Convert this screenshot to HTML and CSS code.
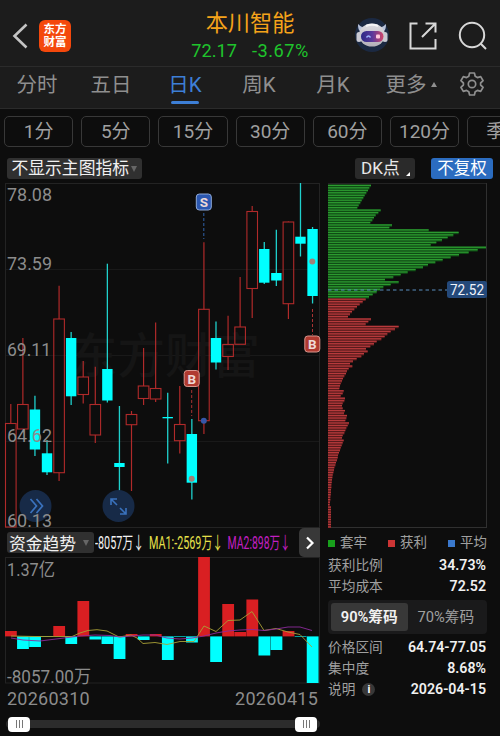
FILE: index.html
```
<!DOCTYPE html>
<html lang="zh-CN">
<head>
  <meta charset="utf-8">
  <title>本川智能</title>
  <link rel="stylesheet" href="styles.css">
</head>
<body>
  <header class="header">
    <svg class="back" width="16" height="26" viewBox="0 0 16 26"><path d="M14.500 1.500L2.500 13l12 11.500" fill="none" stroke="#c4c4c4" stroke-width="2.600"/></svg>
    <div class="logo"><span>东方</span><span>财富</span></div>
    <div class="stock">
      <h1 class="stock-name">本川智能</h1>
      <div class="stock-price"><span>72.17</span><span class="stock-change">-3.67%</span></div>
    </div>
    <div class="header-icons">
      <svg class="robot" width="36" height="36" viewBox="0 0 36 36">
        <defs>
          <linearGradient id="visor"><stop offset="0" stop-color="#2c2a86"/><stop offset=".5" stop-color="#5b3a9c"/><stop offset="1" stop-color="#d0456a"/></linearGradient>
          <linearGradient id="shell" x2="0" y2="1"><stop offset="0" stop-color="#dcdce2"/><stop offset="1" stop-color="#b4b0b8"/></linearGradient>
        </defs>
        <circle cx="18" cy="17" r="17" fill="#1b2942"/>
        <path d="M4 6c0 5 1 8 5 8l5-4c-4 0-7-1-10-4zM32 6c0 5-1 8-5 8l-5-4c4 0 7-1 10-4z" fill="#b9c4dc"/>
        <ellipse cx="18" cy="17" rx="13" ry="11.500" fill="url(#shell)"/>
        <rect x="2.500" y="14" width="5" height="10" rx="2.500" fill="#c9c9d2"/>
        <rect x="28.500" y="14" width="5" height="10" rx="2.500" fill="#c9c9d2"/>
        <path d="M12 8q6-2.500 12 0" fill="none" stroke="#f4f4f6" stroke-width="2"/>
        <rect x="7" y="13" width="22.500" height="11" rx="5.500" fill="url(#visor)"/>
        <path d="M12.500 19.500q2-3 4 0" fill="none" stroke="#9db8ff" stroke-width="1.400"/>
        <rect x="22" y="16.500" width="4" height="4" rx="1" fill="#ffc9dc"/>
      </svg>
      <svg class="share" width="28" height="28" viewBox="0 0 28 28"><path d="M8.500 1.500H1.500V26.500H26.500V17M16.500 1.500H26.500V10.500M26 2L13 15" fill="none" stroke="#d8d8d8" stroke-width="2"/></svg>
      <svg class="search" width="30" height="30" viewBox="0 0 30 30"><circle cx="14" cy="14" r="12.200" fill="none" stroke="#d8d8d8" stroke-width="2"/><path d="M22.800 22.800L28 28" stroke="#d8d8d8" stroke-width="2"/></svg>
    </div>
  </header>

  <nav class="tabs">
    <div class="tab">分时</div>
    <div class="tab">五日</div>
    <div class="tab active">日K</div>
    <div class="tab">周K</div>
    <div class="tab">月K</div>
    <div class="tab more">更多<i class="tri-up"></i></div>
    <div class="tab gear">
      <svg width="26" height="26" viewBox="0 0 26 26" fill="none" stroke="#8f8f8f" stroke-width="1.700" stroke-linejoin="round">
        <path d="M10.600 2h4.800l.8 3.300 2.200 1.300 3.300-1 2.400 4.100-2.500 2.300v2l2.500 2.300-2.400 4.100-3.300-1-2.200 1.300-.8 3.300h-4.800l-.8-3.300-2.200-1.300-3.300 1-2.400-4.100L4.400 14v-2L1.900 9.700l2.400-4.100 3.300 1 2.200-1.300z"/>
        <circle cx="13" cy="13" r="3.700"/>
      </svg>
    </div>
  </nav>

  <div class="periods">
    <div class="period">1分</div>
    <div class="period">5分</div>
    <div class="period">15分</div>
    <div class="period">30分</div>
    <div class="period">60分</div>
    <div class="period">120分</div>
    <div class="period">季K</div>
  </div>

  <div class="toolbar">
    <div class="select">不显示主图指标<i class="tri-down"></i></div>
    <div class="dk">DK点<i class="corner"></i></div>
    <div class="adjust">不复权</div>
  </div>

  <main class="main">
    <section class="left">
      <svg id="kline" width="322" height="346" viewBox="0 182 322 346"></svg>

      <div class="sub-header">
        <div class="select sub-select">资金趋势<i class="tri-down"></i></div>
        <svg class="sub-values" width="204" height="26" viewBox="95 529 204 26">
          <text x="95" y="548.500" textLength="49" lengthAdjust="spacingAndGlyphs" fill="#f2f2f2">-8057万↓</text>
          <text x="149" y="548.500" textLength="74" lengthAdjust="spacingAndGlyphs" fill="#e6e04a">MA1:-2569万↓</text>
          <text x="227.500" y="548.500" textLength="63" lengthAdjust="spacingAndGlyphs" fill="#c21fc2">MA2:898万↓</text>
        </svg>
        <div class="next"><svg width="10" height="14" viewBox="0 0 10 14"><path d="M2 1.500L7.500 7 2 12.500" fill="none" stroke="#fff" stroke-width="2.200"/></svg></div>
      </div>

      <svg id="flow" width="322" height="128" viewBox="0 557 322 128"></svg>

      <div class="dates"><span>20260310</span><span>20260415</span></div>
      <div class="slider">
        <div class="handle"><i></i><i></i><i></i></div>
        <div class="handle"><i></i><i></i><i></i></div>
      </div>
    </section>

    <section class="right">
      <svg id="chips" width="172" height="346" viewBox="328 182 172 346"></svg>
      <div class="legend">
        <span><i class="dot green"></i>套牢</span>
        <span><i class="dot red"></i>获利</span>
        <span><i class="dot blue"></i>平均</span>
      </div>
      <div class="row"><span>获利比例</span><b>34.73%</b></div>
      <div class="row"><span>平均成本</span><b>72.52</b></div>
      <div class="switch"><div class="on">90%筹码</div><div>70%筹码</div></div>
      <div class="row"><span>价格区间</span><b>64.74-77.05</b></div>
      <div class="row"><span>集中度</span><b>8.68%</b></div>
      <div class="row"><span>说明<i class="info">i</i></span><b>2026-04-15</b></div>
    </section>
  </main>
  <script src="chart.js"></script>
</body>
</html>
```

FILE: styles.css
```
* {
  box-sizing: border-box;
}

body {
  margin: 0;
  width: 500px;
  height: 736px;
  overflow: hidden;
  background-color: #0d0d0d;
  color: #a0a0a0;
  font-family: Roboto, "Noto Sans CJK SC", sans-serif;
}

svg {
  display: block;
}

i {
  font-style: normal;
}

.header {
  display: flex;
  align-items: center;
  height: 67px;
  padding: 5px 13px 0 12px;
  background-color: #1c1c1c;
  border-bottom: 1px solid #2b2b2b;
}

.logo {
  display: flex;
  flex-direction: column;
  align-items: center;
  justify-content: center;
  width: 32px;
  height: 32px;
  margin-left: 11px;
  border-radius: 6px;
  background-color: #f4480c;
  color: #fff;
  font-size: 11.500px;
  font-weight: 700;
  line-height: 13px;
}

.stock {
  width: 140px;
  margin-left: 109px;
  text-align: center;
}

.stock-name {
  margin: 2px 0 0;
  color: #f5a31a;
  font-size: 22.200px;
  font-weight: 400;
  line-height: 29px;
}

.stock-price {
  display: flex;
  justify-content: center;
  gap: 15px;
  color: #1fc42c;
  font-size: 18.200px;
  line-height: 26px;
}

.stock-change {
  letter-spacing: 0.5px;
}

.header-icons {
  display: flex;
  align-items: center;
  margin-left: auto;
}

.robot {
  margin-right: 1px;
}

.share {
  margin-left: 18px;
}

.search {
  margin: 0 -1px 0 21px;
}

.tabs {
  display: flex;
  height: 42px;
  background-color: #1c1c1c;
  border-bottom: 1px solid #2b2b2b;
}

.tab {
  display: flex;
  flex-direction: column;
  align-items: center;
  width: 74px;
  flex-shrink: 0;
  color: #8f8f8f;
  font-size: 20.500px;
  line-height: 37px;
}

.tab.active {
  color: #3d7fd6;
}

.tab.active::after {
  content: "";
  width: 28px;
  height: 3px;
  margin-top: -3px;
  border-radius: 2px;
  background-color: #3d7fd6;
}

.tab.more {
  flex-direction: row;
  justify-content: center;
  align-items: flex-start;
  width: 82px;
}

.tab.gear {
  width: 40px;
  padding-top: 4px;
}

.tri-up {
  margin: 15px 0 0 4px;
  border: 3.500px solid transparent;
  border-top: 0;
  border-bottom: 5px solid #8f8f8f;
}

.periods {
  display: flex;
  gap: 8px;
  height: 48px;
  padding: 7px 0 0 4px;
  overflow: hidden;
}

.period {
  flex: 0 0 69.200px;
  height: 31px;
  border: 1px solid #383838;
  border-radius: 5px;
  font-size: 19px;
  line-height: 30px;
  text-align: center;
}

.toolbar {
  display: flex;
  height: 25px;
  padding: 1px 7px 0;
  line-height: 21px;
}

.select {
  display: flex;
  align-items: center;
  width: 135px;
  height: 21px;
  padding-left: 4.500px;
  border-radius: 3px;
  background-color: #303030;
  color: #f0f0f0;
  font-size: 16.800px;
  white-space: nowrap;
}

.tri-down {
  margin-left: 2px;
  border: 3px solid transparent;
  border-bottom: 0;
  border-top: 6px solid #666;
}

.dk {
  display: flex;
  align-items: center;
  width: 60px;
  height: 21px;
  margin-left: 213px;
  padding-left: 6px;
  border-radius: 3px;
  background-color: #2a2a2a;
  color: #e8e8e8;
  font-size: 17px;
}

.corner {
  margin: 10px 0 0 6px;
  border: 2.500px solid #fff;
  border-top-color: transparent;
  border-left-color: transparent;
}

.adjust {
  width: 62px;
  height: 21px;
  margin-left: 16px;
  border-radius: 3px;
  background-color: #2b6cc0;
  color: #fff;
  font-size: 16.500px;
  text-align: center;
}

.main {
  display: flex;
}

.left {
  width: 328px;
}

.axis {
  fill: #8c8c8c;
  font-size: 18px;
}

.watermark {
  fill: #151515;
  font-size: 47.500px;
  font-weight: 500;
}

.mark {
  fill: #eed9d6;
  font-size: 13.500px;
  font-weight: 700;
  text-anchor: middle;
}

.price-tag {
  fill: #f0f4fa;
  font-size: 15.200px;
  text-anchor: middle;
}

.sub-header {
  display: flex;
  height: 29px;
  padding-left: 7px;
}

.sub-select {
  width: 87px;
  margin-top: 4px;
  padding-left: 2px;
}

.sub-select .tri-down {
  margin-left: 7px;
}

.sub-values {
  margin: 1px 0 0 1px;
  font-size: 17.500px;
}

.next {
  display: flex;
  align-items: center;
  justify-content: center;
  width: 21px;
  height: 29px;
  border-radius: 5px 0 0 5px;
  background-color: #383838;
}

.dates {
  display: flex;
  justify-content: space-between;
  width: 318px;
  padding: 0 0 0 7px;
  color: #8c8c8c;
  font-size: 18px;
  letter-spacing: 0.250px;
  line-height: 27px;
}

.slider {
  display: flex;
  justify-content: space-between;
  align-items: center;
  width: 314px;
  height: 8px;
  margin: 8px 0 0 6px;
  padding: 0 3px 0 2px;
  border-radius: 4px;
  background-color: #2c2c2c;
}

.handle {
  display: flex;
  align-items: center;
  justify-content: center;
  gap: 2px;
  width: 22px;
  height: 15px;
  border-radius: 4px;
  background-color: #fff;
}

.handle i {
  width: 1px;
  height: 8px;
  background-color: #777;
}

.right {
  width: 172px;
}

.legend {
  display: flex;
  justify-content: space-between;
  width: 159px;
  height: 27px;
  font-size: 13.500px;
  line-height: 28px;
}

.dot {
  display: inline-block;
  width: 7px;
  height: 7px;
  margin-right: 5px;
}

.green {
  background-color: #18a01c;
}

.red {
  background-color: #cc3434;
}

.blue {
  background-color: #3a78cc;
}

.row {
  display: flex;
  justify-content: space-between;
  width: 158px;
  height: 20.700px;
  font-size: 13.700px;
  line-height: 21px;
}

.row b {
  color: #f0f0f0;
  font-size: 14.200px;
  font-weight: 600;
}

.switch {
  display: flex;
  width: 159px;
  height: 34px;
  margin: 4px 0 3px;
  padding: 3px;
  border-radius: 4px;
  background-color: #1a1a1b;
  font-size: 14.700px;
  line-height: 29px;
  text-align: center;
}

.switch div {
  flex: 1;
}

.switch .on {
  border-radius: 3px;
  background-color: #383838;
  color: #f2f2f2;
  font-weight: 600;
}

.info {
  display: inline-block;
  width: 13px;
  height: 13px;
  margin-left: 7px;
  border-radius: 50%;
  background-color: #383838;
  color: #fff;
  font-size: 11px;
  font-weight: 700;
  line-height: 13px;
  text-align: center;
  vertical-align: 1px;
}
```

FILE: chart.js
```
var RED = '#b02a2a';
var CYAN = '#00ffff';
var START = 10.8;
var STEP = 12.07;

// up/down, high, body top, body bottom, low
var candles = [
  ['u', 404, 423.5, 527, 527], ['u', 338, 404.5, 429, 429],
  ['d', 395.7, 409.5, 449.5, 456], ['d', 440, 453.3, 472.3, 475],
  ['u', 285.7, 319, 472.7, 481], ['d', 332, 338, 396.3, 405],
  ['u', 361, 377, 394.5, 403.5], ['u', 366.7, 404.5, 435, 443],
  ['d', 263.7, 369, 400.5, 402.5], ['d', 406, 463, 467, 491],
  ['u', 411, 414.5, 424.7, 491], ['u', 348, 386, 398.5, 405],
  ['u', 322.5, 388.5, 399, 402], ['d', 392.7, 417, 418.3, 463.5],
  ['u', 386, 424.5, 440.7, 453.5], ['d', 419, 434, 482.7, 499.5],
  ['u', 242.3, 309.3, 420.7, 434], ['d', 321.5, 338, 362.5, 369.5],
  ['u', 315.7, 344.5, 356.5, 370], ['u', 277, 327, 344.3, 344.3],
  ['u', 206, 211.5, 288.5, 318], ['d', 242, 249, 282.7, 284],
  ['d', 229.7, 273, 280.5, 286], ['u', 221.5, 222, 303.7, 319],
  ['d', 183, 236.7, 243.7, 256.5], ['d', 227, 229, 296, 303.5]
];

var flows = [631, 649, 647, 637, 626, 644, 601, 639.5, 644, 659, 634, 640, 634,
  660, 637, 642.5, 557, 662, 604, 632, 599.5, 655.5, 650, 631, 637, 683];

var ma1 = '11,636 35,636.5 72,636.5 80,633 88,630.5 97,629.7 107,631 113,634 119,637 131,635 137,638 143,643.5 155,642.5 167,644.5 180,641.5 194,641.5 204,626 216,631.5 228,620.5 240,620 252,611.5 264,630.5 276,628.5 288,632 300,634.5 312,647';
var ma2 = '11,638 23,640 40,641 60,638.5 80,636 95,635 110,635.5 120,637 143,635 155,635 167,638 180,639 192,638 204,636 216,633 228,631 240,630 252,629.5 264,630.5 276,629 288,627 300,627 312,630.5';

// chip distribution, top to bottom, bar length * 3
var trapped = [129, 124, 120, 115, 110, 106, 101, 97, 92, 88, 158, 151, 143, 138, 133,
  127, 192, 184, 302, 392, 376, 359, 342, 325, 308, 474, 449, 422, 393, 368, 344, 322,
  300, 285, 263, 239, 218, 196, 171, 212, 188, 166, 156, 146, 134, 123];
var profit = [113, 104, 95, 87, 79, 72, 66, 60, 129, 121, 113, 212, 201, 188, 178, 170,
  160, 146, 138, 127, 114, 119, 108, 100, 86, 75, 66, 73, 62, 57, 54, 49, 45, 42, 38, 36,
  34, 47, 44, 38, 51, 49, 44, 42, 44, 51, 48, 57, 55, 52, 63, 59, 55, 52, 49, 44, 42, 47,
  44, 41, 38, 36, 33, 30, 29, 27, 24, 22, 19, 18, 16, 14, 13, 12, 11, 10, 10, 9, 9, 8, 7,
  7, 6, 5, 9, 9, 9, 9, 9, 9, 9, 9, 9];

function rect(x, y, w, h, attrs) {
  return '<rect x="' + x + '" y="' + y + '" width="' + w + '" height="' + h + '" ' + attrs + '/>';
}

function line(x1, y1, x2, y2, color, extra) {
  return '<line x1="' + x1 + '" y1="' + y1 + '" x2="' + x2 + '" y2="' + y2 + '" stroke="' + color + '" ' + (extra || '') + '/>';
}

function label(x, y, text, len) {
  return '<text class="axis" x="' + x + '" y="' + y + '" textLength="' + len + '" lengthAdjust="spacingAndGlyphs">' + text + '</text>';
}

function marker(x, y, text, fill, stroke) {
  return rect(x - 7.5, y - 8, 15, 16, 'rx="3" fill="' + fill + '" stroke="' + stroke + '"') +
    '<text class="mark" x="' + x + '" y="' + (y + 5) + '">' + text + '</text>';
}

function drawKline() {
  var s = rect(5.5, 183.5, 314, 344, 'fill="none" stroke="#232323"');
  s += line(6, 269.5, 319, 269.5, '#191919') + line(6, 355.5, 319, 355.5, '#191919') + line(6, 441.5, 319, 441.5, '#191919');
  s += '<text class="watermark" x="70" y="373">东方财富</text>';
  candles.forEach(function (c, i) {
    var x = START + STEP * i;
    if (c[0] === 'u') {
      s += line(x, c[1], x, c[2], RED, 'stroke-width="1.2"') + line(x, c[3], x, c[4], RED, 'stroke-width="1.2"');
      s += rect(x - 5.3, c[2], 10.6, c[3] - c[2], 'fill="none" stroke="' + RED + '" stroke-width="1.1"');
    } else {
      s += line(x, c[1], x, c[4], '#1fd0cc', 'stroke-width="1.3"');
      s += rect(x - 5.2, c[2], 10.4, c[3] - c[2], 'fill="' + CYAN + '"');
    }
  });
  s += line(203.8, 213, 203.8, 239, '#2f62a8', 'stroke-dasharray="3 2"');
  s += line(191.7, 390, 191.7, 416, '#a83232', 'stroke-dasharray="3 2"');
  s += line(312.5, 309, 312.5, 335, '#a83232', 'stroke-dasharray="3 2"');
  s += marker(203.8, 202, 'S', '#2b57b0', '#8fa9d8');
  s += marker(191.7, 378.5, 'B', '#b03a30', '#d9968e');
  s += marker(312.3, 344, 'B', '#b03a30', '#d9968e');
  s += '<circle cx="203.8" cy="420.7" r="3" fill="#3557a8"/>';
  s += '<circle cx="191.7" cy="478.7" r="3" fill="#a08078"/><circle cx="312.3" cy="261.5" r="3" fill="#a08078"/>';
  s += '<circle cx="35.5" cy="506" r="16" fill="#172a47"/><circle cx="118.5" cy="506" r="16" fill="#172a47"/>';
  s += '<path d="M30.5 499l6 7-6 7M36.5 499l6 7-6 7" fill="none" stroke="#3a72bd" stroke-width="1.7"/>';
  s += '<path d="M117 505l-6-6m0 6v-6h6M120 508l6 6m0-6v6h-6" fill="none" stroke="#3a72bd" stroke-width="1.6"/>';
  s += label(7, 201, '78.08', 45) + label(7, 269.5, '73.59', 45) + label(7, 355.5, '69.11', 44) +
    label(7, 442, '64.62', 45) + label(7, 526.5, '60.13', 45);
  document.getElementById('kline').innerHTML = s;
}

function drawFlow() {
  var zero = 636.4;
  var s = rect(5.5, 557.5, 314, 125.5, 'fill="none" stroke="#232323"');
  flows.forEach(function (y, i) {
    var x = START + STEP * i - 5.8;
    s += rect(x, Math.min(y, zero), 11.8, Math.abs(y - zero), 'fill="' + (y < zero ? '#d91f22' : CYAN) + '"');
  });
  s += '<polyline points="' + ma1 + '" fill="none" stroke="#a9a035" stroke-width="0.9"/>';
  s += '<polyline points="' + ma2 + '" fill="none" stroke="#8c2a9c" stroke-width="0.9"/>';
  s += label(7, 575.5, '1.37亿', 48) + label(7, 683, '-8057.00万', 84);
  document.getElementById('flow').innerHTML = s;
}

function drawChips() {
  var s = line(328, 183.5, 487, 183.5, '#232323') + line(486.5, 183, 486.5, 528, '#303030') + line(328, 527.5, 487, 527.5, '#303030');
  var pitch = 2.475;
  trapped.concat(profit).forEach(function (len, i) {
    var y = 184.7 + pitch * i;
    var up = i < trapped.length;
    s += rect(328, y, len / 3, pitch, 'fill="' + (up ? '#0f4a14' : '#571a1b') + '"');
    s += rect(328, y, len / 3, 1.3, 'fill="' + (up ? '#2c9a30' : '#b83a3c') + '"');
  });
  s += line(328, 290, 447, 290, '#5b8fc0', 'stroke-dasharray="3.5 3"');
  s += rect(447, 281, 40, 17, 'rx="2.5" fill="#24497a"') + '<text class="price-tag" x="467" y="295" textLength="34" lengthAdjust="spacingAndGlyphs">72.52</text>';
  document.getElementById('chips').innerHTML = s;
}

drawKline();
drawFlow();
drawChips();
```
